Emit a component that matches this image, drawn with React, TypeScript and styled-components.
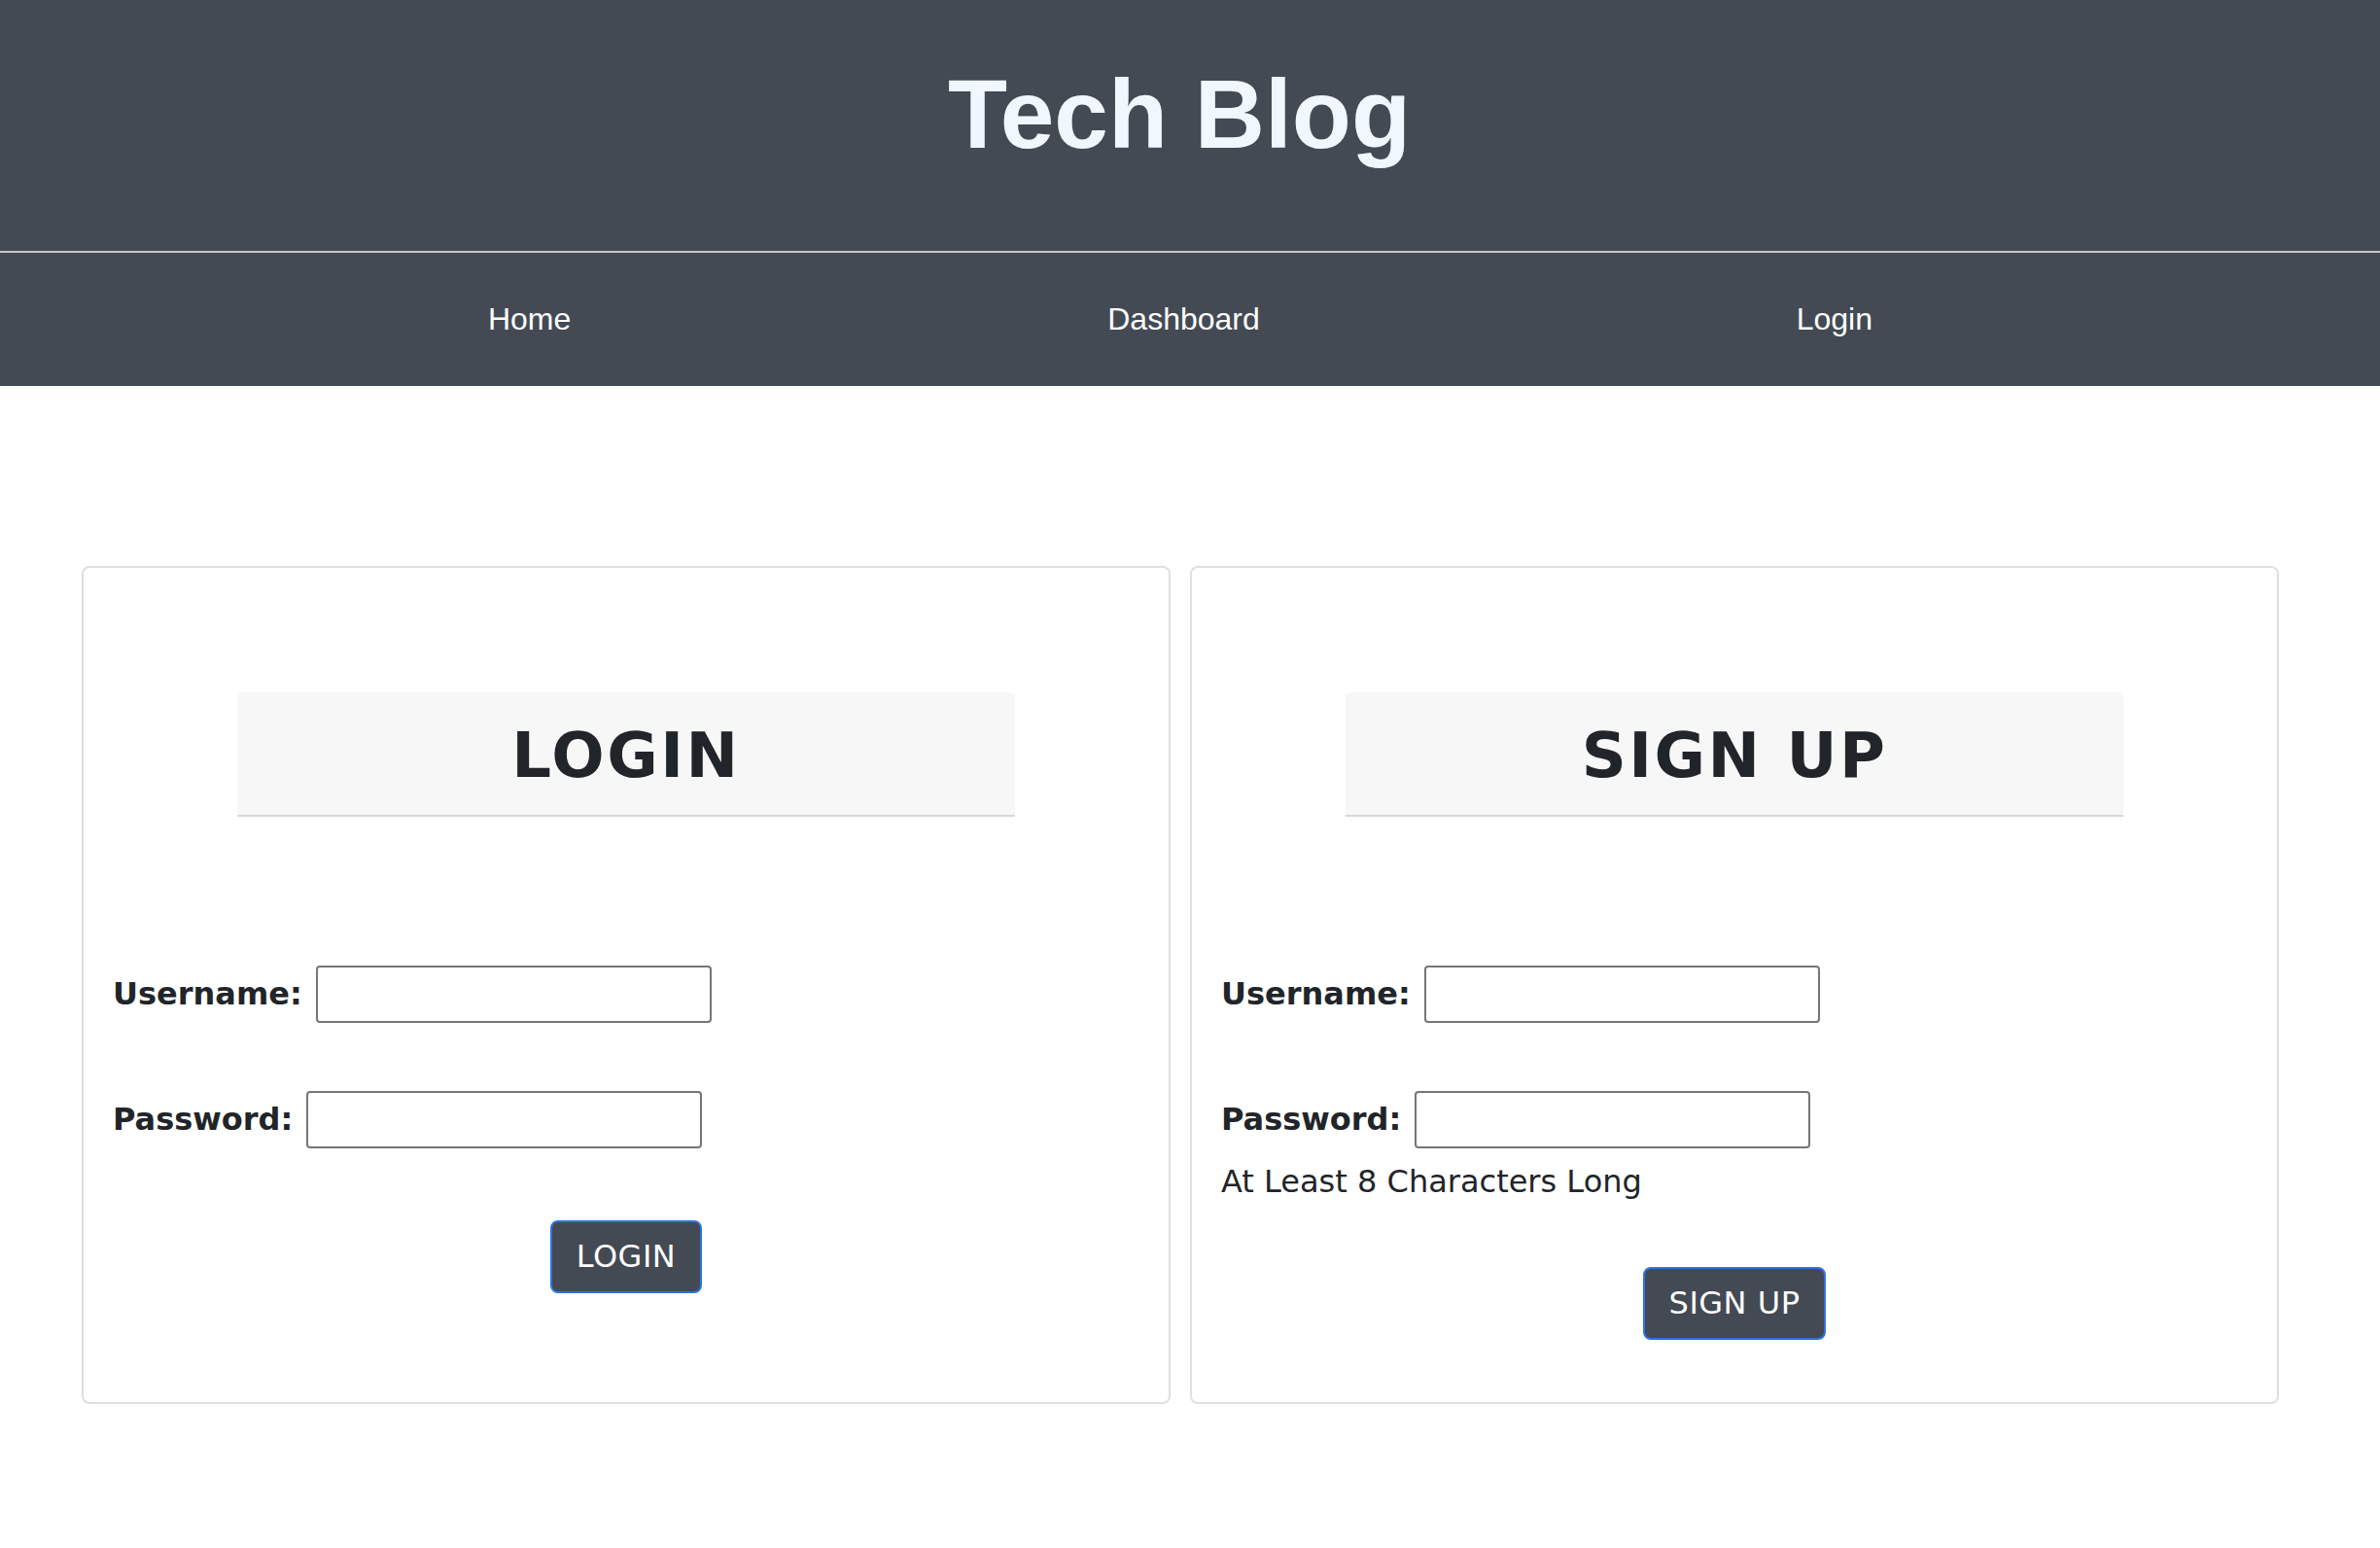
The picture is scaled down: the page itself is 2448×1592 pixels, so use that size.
import React from "react";
import styled, { createGlobalStyle } from "styled-components";

const Global = createGlobalStyle`
  html, body { margin: 0; padding: 0; background: #ffffff; }
  body { font-family: "DejaVu Sans", Verdana, sans-serif; color: #212529; }
  * { box-sizing: border-box; }
`;

const Header = styled.header`
  background: #434a54;
  padding: 60px 22px 83px 0;
  border-bottom: 2px solid #c8c8c8;
  text-align: center;
`;

const Title = styled.h1`
  margin: 0;
  font-family: "Liberation Sans", Arial, Helvetica, sans-serif;
  font-weight: 700;
  font-size: 100px;
  line-height: 115px;
  color: #f0f8ff;
`;

const Nav = styled.nav`
  background: #434a54;
  display: flex;
  justify-content: space-around;
  padding: 50px 246px 50px 226px;
`;

const NavLink = styled.a`
  font-family: "Liberation Sans", Arial, Helvetica, sans-serif;
  font-size: 32px;
  line-height: 37px;
  color: #ffffff;
  text-decoration: none;
`;

const Main = styled.main`
  display: flex;
  gap: 20px;
  padding: 185px 104px 0 84px;
  align-items: stretch;
`;

const Card = styled.section`
  flex: 1;
  border: 2px solid #dfdfdf;
  border-radius: 8px;
  padding: 128px 30px 64px;
  display: flex;
  flex-direction: column;
`;

const CardHeading = styled.h2`
  width: 800px;
  margin: 0 auto;
  background: #f7f7f7;
  border-bottom: 2px solid #d8d8d8;
  border-radius: 6px 6px 0 0;
  padding: 27px 40px 22px;
  text-align: center;
  font-family: "DejaVu Sans", Verdana, sans-serif;
  font-weight: 700;
  font-size: 64px;
  line-height: 77px;
  letter-spacing: 2.5px;
  color: #212529;
`;

const Form = styled.form`
  display: flex;
  flex-direction: column;
  margin-top: 153px;
`;

const Row = styled.div<{ $top?: number }>`
  display: flex;
  align-items: center;
  gap: 14px;
  margin-top: ${(p) => p.$top ?? 0}px;
`;

const Label = styled.label`
  font-family: "DejaVu Sans", Verdana, sans-serif;
  font-weight: 700;
  font-size: 32px;
  line-height: 37px;
  color: #212529;
`;

const Input = styled.input`
  width: 407px;
  height: 59px;
  border: 2px solid #767676;
  border-radius: 4px;
  background: #ffffff;
  padding: 2px 6px;
  font-size: 28px;
`;

const Hint = styled.p`
  margin: 16px 0 0;
  font-family: "DejaVu Sans", Verdana, sans-serif;
  font-size: 32px;
  line-height: 37px;
  color: #212529;
`;

const ButtonWrap = styled.div<{ $top: number }>`
  display: flex;
  justify-content: center;
  margin-top: ${(p) => p.$top}px;
`;

const Button = styled.button`
  height: 75px;
  padding: 0 25px;
  background: #434a54;
  color: #ffffff;
  border: 2px solid #2f74e0;
  border-radius: 8px;
  font-family: "DejaVu Sans", Verdana, sans-serif;
  font-size: 32px;
  line-height: 37px;
  letter-spacing: 0.5px;
  cursor: pointer;
`;

export default function App() {
  return (
    <>
      <Global />
      <Header>
        <Title>Tech Blog</Title>
      </Header>
      <Nav>
        <NavLink href="#">Home</NavLink>
        <NavLink href="#">Dashboard</NavLink>
        <NavLink href="#">Login</NavLink>
      </Nav>
      <Main>
        <Card>
          <CardHeading>LOGIN</CardHeading>
          <Form onSubmit={(e) => e.preventDefault()}>
            <Row>
              <Label htmlFor="login-username">Username:</Label>
              <Input id="login-username" type="text" />
            </Row>
            <Row $top={70}>
              <Label htmlFor="login-password">Password:</Label>
              <Input id="login-password" type="password" />
            </Row>
            <ButtonWrap $top={74}>
              <Button type="submit">LOGIN</Button>
            </ButtonWrap>
          </Form>
        </Card>
        <Card>
          <CardHeading>SIGN UP</CardHeading>
          <Form onSubmit={(e) => e.preventDefault()}>
            <Row>
              <Label htmlFor="signup-username">Username:</Label>
              <Input id="signup-username" type="text" />
            </Row>
            <Row $top={70}>
              <Label htmlFor="signup-password">Password:</Label>
              <Input id="signup-password" type="password" />
            </Row>
            <Hint>At Least 8 Characters Long</Hint>
            <ButtonWrap $top={69}>
              <Button type="submit">SIGN UP</Button>
            </ButtonWrap>
          </Form>
        </Card>
      </Main>
    </>
  );
}
